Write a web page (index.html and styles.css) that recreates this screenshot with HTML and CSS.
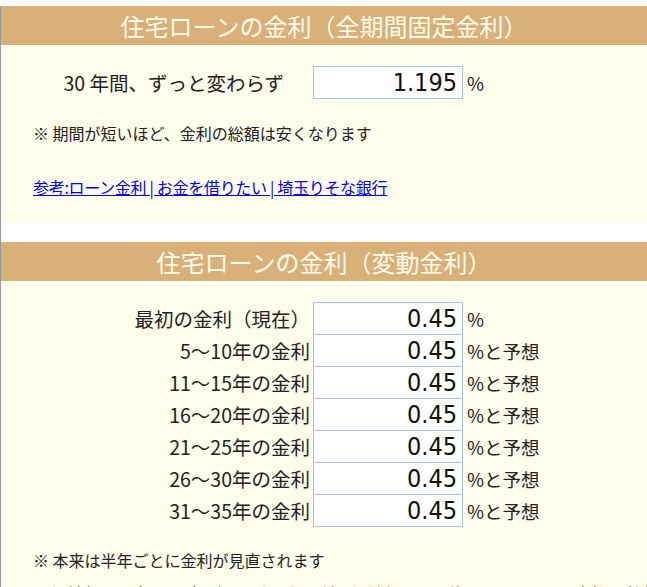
FILE: index.html
```html
<!DOCTYPE html>
<html lang="ja">

<head>
    <meta charset="UTF-8">
    <meta name="viewport" content="width=device-width, initial-scale=1.0">
    <title>住宅ローンの金利</title>
    <link rel="stylesheet" href="styles.css">
</head>

<body>
    <div class="page">
        <!-- 全期間固定 -->
        <div class="section">
            <div class="section-title">住宅ローンの金利（全期間固定金利）</div>
            <div class="section-body">
                <div class="rate-row fixed">
                    <label class="rate-label" for="fixedRate">30 年間、ずっと変わらず</label>
                    <input class="rate-input" type="text" id="fixedRate" value="1.195">
                    <span class="rate-unit">%</span>
                </div>
                <p class="note">※ 期間が短いほど、金利の総額は安くなります</p>
                <p class="ref"><a href="#">参考:ローン金利 | お金を借りたい | 埼玉りそな銀行</a></p>
            </div>
        </div>

        <!-- 変動 -->
        <div class="section">
            <div class="section-title">住宅ローンの金利（変動金利）</div>
            <div class="section-body">
                <div class="rate-table">
                    <div class="rate-row">
                        <label class="rate-label" for="rate0">最初の金利（現在）</label>
                        <input class="rate-input" type="text" id="rate0" value="0.45">
                        <span class="rate-unit">%</span>
                    </div>
                    <div class="rate-row">
                        <label class="rate-label" for="rate1">5～10年の金利</label>
                        <input class="rate-input" type="text" id="rate1" value="0.45">
                        <span class="rate-unit">%と予想</span>
                    </div>
                    <div class="rate-row">
                        <label class="rate-label" for="rate2">11～15年の金利</label>
                        <input class="rate-input" type="text" id="rate2" value="0.45">
                        <span class="rate-unit">%と予想</span>
                    </div>
                    <div class="rate-row">
                        <label class="rate-label" for="rate3">16～20年の金利</label>
                        <input class="rate-input" type="text" id="rate3" value="0.45">
                        <span class="rate-unit">%と予想</span>
                    </div>
                    <div class="rate-row">
                        <label class="rate-label" for="rate4">21～25年の金利</label>
                        <input class="rate-input" type="text" id="rate4" value="0.45">
                        <span class="rate-unit">%と予想</span>
                    </div>
                    <div class="rate-row">
                        <label class="rate-label" for="rate5">26～30年の金利</label>
                        <input class="rate-input" type="text" id="rate5" value="0.45">
                        <span class="rate-unit">%と予想</span>
                    </div>
                    <div class="rate-row">
                        <label class="rate-label" for="rate6">31～35年の金利</label>
                        <input class="rate-input" type="text" id="rate6" value="0.45">
                        <span class="rate-unit">%と予想</span>
                    </div>
                </div>
                <p class="note note2">※ 本来は半年ごとに金利が見直されます</p>
                <p class="note note3">※ 返済額の見直しは5年ごとで <span class="warn">上昇幅は前回返済額の1.25倍まで</span>。ただし、未払い利息が発生します</p>
            </div>
        </div>
    </div>
</body>

</html>
```

FILE: styles.css
```css
html, body {
    overflow: hidden;
}

body {
    margin: 0;
    padding-top: 6px;
    font-family: "Noto Sans CJK JP", sans-serif;
    color: #222;
    background-color: #fff;
}

.page {
    border-left: 1px solid #999;
    min-height: 700px;
}

.section + .section {
    margin-top: 19px;
}

.section-title {
    height: 39px;
    line-height: 39px;
    text-align: center;
    font-size: 24px;
    color: #fffcee;
    background-color: #d8b078;
}

.section-body {
    background-color: #fffdec;
    padding: 21px 0 24px;
}

.rate-row {
    display: grid;
    grid-template-columns: 312px 150px auto;
    align-items: center;
    height: 32px;
}

.rate-row.fixed {
    height: 33px;
}

.rate-label {
    text-align: right;
    font-size: 19.5px;
    padding-right: 3px;
    white-space: nowrap;
}

.fixed .rate-label {
    padding-right: 29px;
}

.rate-input {
    box-sizing: border-box;
    width: 150px;
    height: 33px;
    margin: 0;
    padding: 0 5px 0 0;
    border: 1px solid #9fc3ea;
    background-color: #fff;
    font-family: "DejaVu Sans Condensed", "DejaVu Sans", sans-serif;
    font-size: 25px;
    color: #111;
    text-align: right;
    outline: none;
}

.rate-table .rate-row .rate-input {
    align-self: start;
}

.rate-table .rate-row:last-child {
    height: 33px;
}

.rate-unit {
    font-size: 18.5px;
    padding-left: 4px;
    white-space: nowrap;
}

.note {
    margin: 22px 0 0;
    padding-left: 32px;
    font-size: 16px;
    line-height: 24px;
}

.ref {
    margin: 30px 0 0;
    padding-left: 32px;
    font-size: 16px;
    line-height: 24px;
    letter-spacing: -0.3px;
}

.ref a {
    color: #0000ee;
}

.note2 {
    margin-top: 21px;
}

.note3 {
    margin-top: 9px;
    white-space: nowrap;
}

.warn {
    color: #f55;
}
```
